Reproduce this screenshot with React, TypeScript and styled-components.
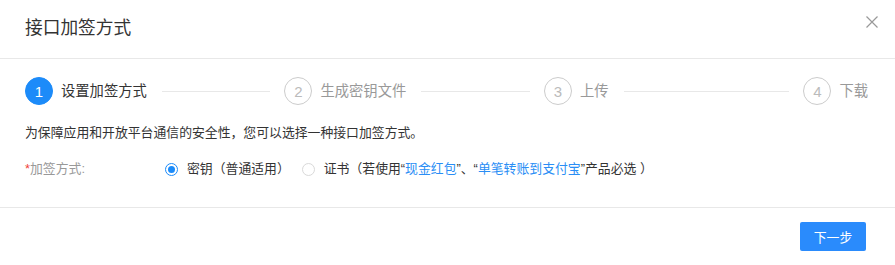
import React from "react";
import styled, { createGlobalStyle } from "styled-components";

const GlobalStyle = createGlobalStyle`
  html, body { margin: 0; padding: 0; background: #fff; }
  body {
    font-family: "Helvetica Neue", "Liberation Sans", "Noto Sans CJK SC", sans-serif;
    color: #333;
  }
  * { box-sizing: border-box; }
`;

const Dialog = styled.div`
  width: 895px;
  height: 265px;
  background: #fff;
  display: flex;
  flex-direction: column;
`;

const Header = styled.div`
  height: 59px;
  padding: 0 17px 0 25px;
  border-bottom: 1px solid #e8e8e8;
  display: flex;
  align-items: center;
  justify-content: space-between;
`;

const Title = styled.div`
  font-size: 17.7px;
  line-height: 24px;
  color: #333;
  margin-top: -2px;
`;

const Close = styled.button`
  border: 0;
  background: transparent;
  padding: 0;
  width: 12px;
  height: 12px;
  margin-top: -14px;
  display: flex;
  cursor: pointer;
`;

const Body = styled.div`
  padding: 18px 27px 28px 25px;
  border-bottom: 1px solid #e8e8e8;
`;

const Steps = styled.div`
  display: flex;
  align-items: center;
  height: 28px;
`;

const Step = styled.div<{ $last?: boolean }>`
  display: flex;
  align-items: center;
  flex: ${(p) => (p.$last ? "none" : "1")};
`;

const Circle = styled.div<{ $active?: boolean }>`
  width: 28px;
  height: 28px;
  border-radius: 50%;
  flex: none;
  display: flex;
  align-items: center;
  justify-content: center;
  font-size: 15px;
  font-family: "Helvetica Neue", "Liberation Sans", sans-serif;
  background: ${(p) => (p.$active ? "#1c8bf9" : "#fff")};
  color: ${(p) => (p.$active ? "#fff" : "#bbb")};
  border: 1px solid ${(p) => (p.$active ? "#1c8bf9" : "#ccc")};
`;

const StepTitle = styled.div<{ $active?: boolean }>`
  margin-left: 8px;
  font-size: 14.3px;
  line-height: 20px;
  color: ${(p) => (p.$active ? "#333" : "#999")};
  white-space: nowrap;
`;

const Line = styled.div`
  flex: 1;
  height: 1px;
  background: #e8e8e8;
  margin: 0 14px 0 15px;
`;

const Desc = styled.div`
  margin-top: 18px;
  font-size: 12.85px;
  line-height: 20px;
  color: #333;
`;

const FormRow = styled.div`
  margin-top: 16px;
  display: flex;
  align-items: center;
  font-size: 12.85px;
  line-height: 20px;
`;

const Label = styled.div`
  width: 140px;
  color: #999;
  flex: none;
`;

const Star = styled.span`
  color: #f04134;
`;

const RadioGroup = styled.div`
  display: flex;
  align-items: center;
  gap: 12px;
`;

const RadioItem = styled.label`
  display: flex;
  align-items: center;
  color: #333;
  cursor: pointer;
  white-space: nowrap;
`;

const RadioDot = styled.span<{ $checked?: boolean }>`
  width: 13px;
  height: 13px;
  border-radius: 50%;
  border: 1px solid ${(p) => (p.$checked ? "#1c8bf9" : "#d9d9d9")};
  margin-right: 9px;
  display: flex;
  align-items: center;
  justify-content: center;
  flex: none;
  &::after {
    content: "";
    width: 7px;
    height: 7px;
    border-radius: 50%;
    background: ${(p) => (p.$checked ? "#1c8bf9" : "transparent")};
  }
`;

const Link = styled.a`
  color: #2a8ef5;
  text-decoration: none;
`;

const Footer = styled.div`
  display: flex;
  justify-content: flex-end;
  padding: 14px 29px 14px 25px;
`;

const Primary = styled.button`
  width: 66px;
  height: 29px;
  border: 0;
  border-radius: 2px;
  background: #2a8bfc;
  color: #fff;
  font-size: 12.85px;
  font-family: inherit;
  cursor: pointer;
`;

const steps = ["设置加签方式", "生成密钥文件", "上传", "下载"];

export default function App() {
  return (
    <Dialog>
      <GlobalStyle />
      <Header>
        <Title>接口加签方式</Title>
        <Close aria-label="关闭">
          <svg width="12" height="12" viewBox="0 0 12 12">
            <path d="M0.5 0.5 L11.5 11.5 M11.5 0.5 L0.5 11.5" stroke="#999" strokeWidth="1.2" fill="none" />
          </svg>
        </Close>
      </Header>
      <Body>
        <Steps>
          {steps.map((s, i) => {
            const last = i === steps.length - 1;
            return (
              <Step key={s} $last={last}>
                <Circle $active={i === 0}>{i + 1}</Circle>
                <StepTitle $active={i === 0}>{s}</StepTitle>
                {!last && <Line />}
              </Step>
            );
          })}
        </Steps>
        <Desc>为保障应用和开放平台通信的安全性，您可以选择一种接口加签方式。</Desc>
        <FormRow>
          <Label>
            <Star>*</Star>加签方式:
          </Label>
          <RadioGroup>
            <RadioItem>
              <RadioDot $checked />
              密钥（普通适用）
            </RadioItem>
            <RadioItem>
              <RadioDot />
              证书（若使用“<Link>现金红包</Link>”、“<Link>单笔转账到支付宝</Link>”产品必选 ）
            </RadioItem>
          </RadioGroup>
        </FormRow>
      </Body>
      <Footer>
        <Primary>下一步</Primary>
      </Footer>
    </Dialog>
  );
}
